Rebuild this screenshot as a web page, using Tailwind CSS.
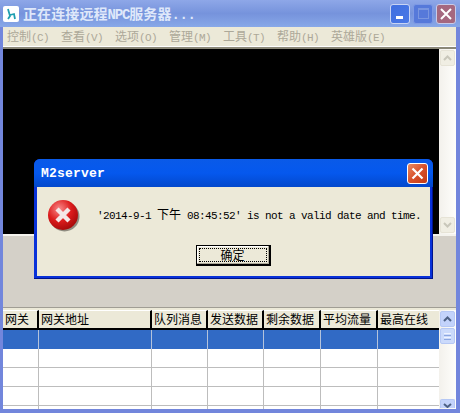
<!DOCTYPE html>
<html><head><meta charset="utf-8">
<script src="https://cdn.jsdelivr.net/npm/@tailwindcss/browser@4"></script>
</head>
<body class="m-0 overflow-hidden">
<div class="relative w-[460px] h-[413px] overflow-hidden flex flex-col bg-[#7286dc] font-['Noto_Sans_CJK_SC',sans-serif] text-[12px] leading-none">
  <!-- title bar -->
  <div class="h-[27px] shrink-0 flex items-center bg-gradient-to-b from-[#8ea7e8] via-[#7693dc] to-[#88a8e8] relative">
    <div class="w-[16px] h-[16px] ml-[3px] mt-[1px] bg-white rounded-[2px] flex items-center justify-center">
      <svg width="14" height="14" viewBox="0 0 14 14"><path d="M4 2 L6 9 L4 12 M6 8 L10 7 L11 12" fill="none" stroke="#1f9fb0" stroke-width="1.8"/></svg>
    </div>
    <div class="ml-[4px] text-[14px] font-bold text-[#dfe8fa] whitespace-nowrap tracking-[0.1px]">正在连接远程<span class="font-['Liberation_Mono'] tracking-[-1.2px]">NPC</span>服务器<span class="font-['Liberation_Mono'] tracking-[-0.4px]">...</span></div>
    <div class="ml-auto mr-[4px] flex gap-[3px]">
      <div class="w-[20px] h-[20px] rounded-[3px] border border-[#c8d4f4] bg-gradient-to-br from-[#3f6fe0] to-[#4a78e6] relative"><div class="absolute left-[5px] bottom-[4px] w-[7px] h-[3px] bg-white"></div></div>
      <div class="w-[20px] h-[20px] rounded-[3px] border border-[#7f9ae4] bg-[#5679da] flex items-center justify-center"><div class="w-[11px] h-[11px] border border-[#7a96e0] border-t-2"></div></div>
      <div class="w-[20px] h-[20px] rounded-[3px] border border-[#c8cbe8] bg-[#a5687f] flex items-center justify-center"><svg width="12" height="12" viewBox="0 0 12 12"><path d="M1 1 L11 11 M11 1 L1 11" stroke="#fff" stroke-width="2"/></svg></div>
    </div>
  </div>
  <!-- body -->
  <div class="flex-1 mx-[3px] mr-[4px] flex flex-col bg-[#ece9d8] min-h-0">
    <!-- menu -->
    <div class="h-[19px] shrink-0 flex items-center text-[#aca899] whitespace-nowrap">
      <div class="w-[54px] pl-[4px]">控制<span class="font-['Liberation_Mono'] text-[11px] tracking-[-0.6px]">(C)</span></div>
      <div class="w-[54px] pl-[4px]">查看<span class="font-['Liberation_Mono'] text-[11px] tracking-[-0.6px]">(V)</span></div>
      <div class="w-[54px] pl-[4px]">选项<span class="font-['Liberation_Mono'] text-[11px] tracking-[-0.6px]">(O)</span></div>
      <div class="w-[54px] pl-[4px]">管理<span class="font-['Liberation_Mono'] text-[11px] tracking-[-0.6px]">(M)</span></div>
      <div class="w-[54px] pl-[4px]">工具<span class="font-['Liberation_Mono'] text-[11px] tracking-[-0.6px]">(T)</span></div>
      <div class="w-[54px] pl-[4px]">帮助<span class="font-['Liberation_Mono'] text-[11px] tracking-[-0.6px]">(H)</span></div>
      <div class="pl-[4px]">英雄版<span class="font-['Liberation_Mono'] text-[11px] tracking-[-0.6px]">(E)</span></div>
    </div>
    <div class="h-[1px] bg-[#fff] shrink-0"></div>
    <div class="h-[2px] bg-[#8b8878] shrink-0"></div>
    <!-- black panel with scrollbar -->
    <div class="h-[185px] shrink-0 flex bg-black">
      <div class="flex-1"></div>
      <div class="w-[17px] flex flex-col justify-between py-[1px] bg-gradient-to-r from-[#f3f1ec] to-[#fefefb]">
        <div class="h-[16px] mx-[1px] rounded-[2px] border border-[#e6e3d6] bg-[#f0eee3] flex items-center justify-center"><svg width="9" height="6" viewBox="0 0 9 6"><path d="M1 5 L4.5 1.5 L8 5" fill="none" stroke="#c9c7ba" stroke-width="2"/></svg></div>
        <div class="h-[16px] mx-[1px] rounded-[2px] border border-[#e6e3d6] bg-[#f0eee3] flex items-center justify-center"><svg width="9" height="6" viewBox="0 0 9 6"><path d="M1 1 L4.5 4.5 L8 1" fill="none" stroke="#c9c7ba" stroke-width="2"/></svg></div>
      </div>
    </div>
    <!-- gray panel -->
    <div class="h-[74px] shrink-0 bg-[#d4d0c8] border-t-2 border-t-[#f4f3ee] border-b border-b-[#a09d94]"></div>
    <div class="h-[2px] shrink-0 bg-[#ece9d8]"></div>
    <!-- table -->
    <div class="flex-1 flex min-h-0 overflow-hidden bg-white">
      <div class="w-[436px] overflow-hidden">
        <div class="grid grid-cols-[36px_113px_56px_56px_57px_57px_61px] h-[20px] text-black text-[12px] bg-[#ece9d8]">
          <div class="border-t border-t-white border-r-2 border-r-black border-b-2 border-b-black pl-[2px] pt-[1px] leading-[14px] whitespace-nowrap">网关</div>
          <div class="border-t border-t-white border-r-2 border-r-black border-b-2 border-b-black pl-[2px] pt-[1px] leading-[14px] whitespace-nowrap">网关地址</div>
          <div class="border-t border-t-white border-r-2 border-r-black border-b-2 border-b-black pl-[2px] pt-[1px] leading-[14px] whitespace-nowrap overflow-hidden">队列消息</div>
          <div class="border-t border-t-white border-r-2 border-r-black border-b-2 border-b-black pl-[2px] pt-[1px] leading-[14px] whitespace-nowrap overflow-hidden">发送数据</div>
          <div class="border-t border-t-white border-r-2 border-r-black border-b-2 border-b-black pl-[2px] pt-[1px] leading-[14px] whitespace-nowrap overflow-hidden">剩余数据</div>
          <div class="border-t border-t-white border-r-2 border-r-black border-b-2 border-b-black pl-[2px] pt-[1px] leading-[14px] whitespace-nowrap overflow-hidden">平均流量</div>
          <div class="border-t border-t-white border-b-2 border-b-black pl-[2px] pt-[1px] leading-[14px] whitespace-nowrap overflow-hidden">最高在线</div>
        </div>
        <div class="grid grid-cols-[36px_113px_56px_56px_57px_57px_61px] h-[19px] bg-[#316ac5]">
          <div class="border-r border-r-[#b4c3dc]"></div><div class="border-r border-r-[#b4c3dc]"></div><div class="border-r border-r-[#b4c3dc]"></div><div class="border-r border-r-[#b4c3dc]"></div><div class="border-r border-r-[#b4c3dc]"></div><div class="border-r border-r-[#b4c3dc]"></div><div></div>
        </div>
        <div class="grid grid-cols-[36px_113px_56px_56px_57px_57px_61px] h-[19px] border-b border-b-[#bdbdbd]">
          <div class="border-r border-r-[#bdbdbd]"></div><div class="border-r border-r-[#bdbdbd]"></div><div class="border-r border-r-[#bdbdbd]"></div><div class="border-r border-r-[#bdbdbd]"></div><div class="border-r border-r-[#bdbdbd]"></div><div class="border-r border-r-[#bdbdbd]"></div><div></div>
        </div>
        <div class="grid grid-cols-[36px_113px_56px_56px_57px_57px_61px] h-[19px] border-b border-b-[#bdbdbd]">
          <div class="border-r border-r-[#bdbdbd]"></div><div class="border-r border-r-[#bdbdbd]"></div><div class="border-r border-r-[#bdbdbd]"></div><div class="border-r border-r-[#bdbdbd]"></div><div class="border-r border-r-[#bdbdbd]"></div><div class="border-r border-r-[#bdbdbd]"></div><div></div>
        </div>
        <div class="grid grid-cols-[36px_113px_56px_56px_57px_57px_61px] h-[19px] border-b border-b-[#bdbdbd]">
          <div class="border-r border-r-[#bdbdbd]"></div><div class="border-r border-r-[#bdbdbd]"></div><div class="border-r border-r-[#bdbdbd]"></div><div class="border-r border-r-[#bdbdbd]"></div><div class="border-r border-r-[#bdbdbd]"></div><div class="border-r border-r-[#bdbdbd]"></div><div></div>
        </div>
        <div class="grid grid-cols-[36px_113px_56px_56px_57px_57px_61px] h-[19px]">
          <div class="border-r border-r-[#bdbdbd]"></div><div class="border-r border-r-[#bdbdbd]"></div><div class="border-r border-r-[#bdbdbd]"></div><div class="border-r border-r-[#bdbdbd]"></div><div class="border-r border-r-[#bdbdbd]"></div><div class="border-r border-r-[#bdbdbd]"></div><div></div>
        </div>
      </div>
      <!-- table scrollbar -->
      <div class="w-[17px] flex flex-col py-[1px] gap-[1px] bg-gradient-to-r from-[#f3f1ec] to-[#fefefb] overflow-hidden">
        <div class="h-[16px] shrink-0 mx-[1px] rounded-[2px] border border-[#b6c8f4] bg-[#c3d3fb] flex items-center justify-center"><svg width="9" height="6" viewBox="0 0 9 6"><path d="M1 5 L4.5 1.5 L8 5" fill="none" stroke="#4d6185" stroke-width="2"/></svg></div>
        <div class="h-[16px] shrink-0 mx-[1px] rounded-[2px] border border-[#b6c8f4] bg-[#cbdafb] flex flex-col items-center justify-center gap-[1px]">
          <div class="w-[7px] h-[1px] bg-[#eef3ff]"></div><div class="w-[7px] h-[1px] bg-[#8ca6e0]"></div><div class="w-[7px] h-[1px] bg-[#eef3ff]"></div><div class="w-[7px] h-[1px] bg-[#8ca6e0]"></div>
        </div>
        <div class="mt-auto h-[9px] shrink-0 mx-[1px] rounded-t-[2px] border border-b-0 border-[#b6c8f4] bg-[#c3d3fb] flex justify-center pt-[3px]"><svg width="9" height="5" viewBox="0 0 9 5"><path d="M1 1 L4.5 4 L8 1" fill="none" stroke="#4d6185" stroke-width="2"/></svg></div>
      </div>
    </div>
  </div>
  <div class="h-[4px] shrink-0"></div>

  <!-- dialog -->
  <div class="absolute left-[34px] top-[159px] w-[399px] h-[120px] rounded-t-[6px] bg-[#0831d9] shadow-[inset_-1px_-1px_0_#00138c] flex flex-col">
    <div class="h-[28px] shrink-0 rounded-t-[6px] bg-gradient-to-b from-[#0a5ae8] via-[#0558ee] to-[#0348cc] flex items-center">
      <div class="ml-[7px] text-white font-['Liberation_Mono'] font-bold text-[13px] tracking-[0.2px]">M2server</div>
      <div class="ml-auto mr-[5px] w-[21px] h-[21px] rounded-[3px] border border-white bg-gradient-to-br from-[#e88a62] via-[#d8502a] to-[#c23a14] flex items-center justify-center"><svg width="13" height="13" viewBox="0 0 13 13"><path d="M1.5 1.5 L11.5 11.5 M11.5 1.5 L1.5 11.5" stroke="#fff" stroke-width="2.2"/></svg></div>
    </div>
    <div class="relative flex-1 mx-[3px] mb-[3px] mr-[3px] bg-[#ece9d8] flex flex-col text-black">
      <div class="flex items-center h-[56px] shrink-0">
        <svg class="ml-[10px] shrink-0" width="33" height="33" viewBox="0 0 33 33">
          <defs><radialGradient id="r" cx="0.38" cy="0.3" r="0.8"><stop offset="0" stop-color="#f98a8a"/><stop offset="0.5" stop-color="#dc1c1c"/><stop offset="1" stop-color="#9a0606"/></radialGradient></defs>
          <circle cx="17.5" cy="17.5" r="15" fill="#8f8c80"/>
          <circle cx="16" cy="16" r="15" fill="url(#r)"/>
          <path d="M10 10 L22 22 M22 10 L10 22" stroke="#f4e8e8" stroke-width="4.4"/>
        </svg>
        <div class="ml-[17px] whitespace-nowrap font-['Liberation_Mono'] text-[11px] tracking-[-0.6px]">'2014-9-1 <span class="font-['Noto_Sans_CJK_SC'] text-[12px] tracking-normal">下午</span> 08:45:52' is not a valid date and time.</div>
      </div>
      <div class="flex justify-center">
        <div class="ml-[-1px] mt-[2px] w-[75px] h-[21px] border border-black border-r-2 border-b-2 bg-[#ece9d8] shadow-[inset_-1px_-1px_0_#aca899,inset_1px_1px_0_#fff] p-[2px] text-[12px]">
          <div class="w-full h-full border border-dotted border-black flex items-center justify-center">确定</div>
        </div>
      </div>
    </div>
  </div>
</div>
</body></html>
